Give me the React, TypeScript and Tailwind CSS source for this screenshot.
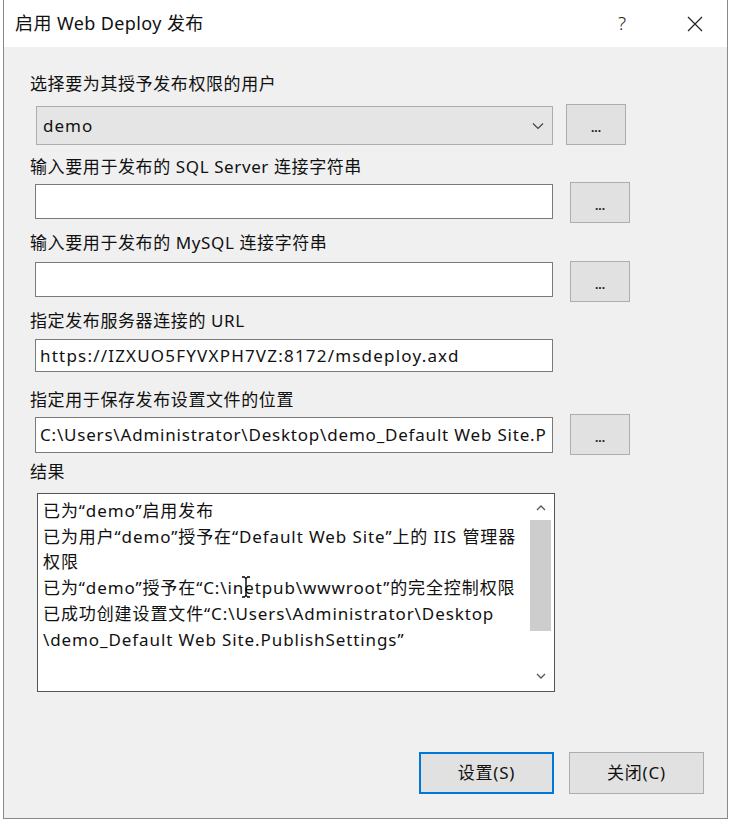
import React from "react";

const font = { fontFamily: '"Noto Sans", "Noto Sans CJK SC", sans-serif' };

function Label({ text, mt }: { text: string; mt: string }) {
  return (
    <div className={`${mt} h-[22px] leading-[22px] pl-[26px] text-[17px] tracking-[0.6px] text-[#111]`}>{text}</div>
  );
}

function DotsButton() {
  return (
    <div className="w-[60px] h-[41px] bg-[#e1e1e1] border border-[#adadad] flex items-end justify-center pb-[10px] text-[12px] leading-none text-[#222] font-bold">
      ...
    </div>
  );
}

function TextBox({ value, h, mt, track = "tracking-[1.2px]" }: { value?: string; h: string; mt: string; track?: string }) {
  return (
    <div className={`w-[518px] ${h} ${mt} bg-white border border-[#7a7a7a] pl-[4px] flex items-center text-[17px] ${track} text-[#111] whitespace-nowrap overflow-hidden`}>
      {value}
    </div>
  );
}

const results = [
  "已为“demo”启用发布",
  "已为用户“demo”授予在“Default Web Site”上的 IIS 管理器",
  "权限",
  "已为“demo”授予在“C:\\inetpub\\wwwroot”的完全控制权限",
  "已成功创建设置文件“C:\\Users\\Administrator\\Desktop",
  "\\demo_Default Web Site.PublishSettings”",
];

export default function App() {
  return (
    <div className="w-[730px] h-[825px] bg-white" style={font}>
      <div className="ml-[3px] w-[725px] h-[819px] border-l border-r border-b border-[#8a8a8a] flex flex-col">
        {/* Title bar */}
        <div className="h-[47px] bg-white flex items-center pl-[11px] pr-[24px]">
          <span className="text-[18px] tracking-[0.4px] text-[#111]">启用 Web Deploy 发布</span>
          <span className="ml-auto text-[19px] font-light text-[#222]">?</span>
          <svg className="ml-[61px]" width="16" height="16" viewBox="0 0 16 16">
            <path d="M1 1 L15 15 M15 1 L1 15" stroke="#222" strokeWidth="1.2" />
          </svg>
        </div>

        {/* Body */}
        <div className="flex-1 bg-[#f0f0f0] flex flex-col">
          <Label text="选择要为其授予发布权限的用户" mt="mt-[26px]" />
          <div className="mt-[9px] flex pl-[32px] gap-[13px]">
            <div className="w-[517px] h-[39px] mt-[2px] bg-[#e5e5e5] border border-[#adadad] flex items-center pl-[6px] pr-[8px] text-[17px] tracking-[1px] text-[#111]">
              demo
              <svg className="ml-auto" width="12" height="8" viewBox="0 0 12 8">
                <path d="M1 1.5 L6 6.5 L11 1.5" stroke="#444" strokeWidth="1.2" fill="none" />
              </svg>
            </div>
            <DotsButton />
          </div>

          <Label text="输入要用于发布的 SQL Server 连接字符串" mt="mt-[11px]" />
          <div className="mt-[4px] flex items-start pl-[31px] gap-[17px]">
            <TextBox h="h-[35px]" mt="mt-[2px]" />
            <DotsButton />
          </div>

          <Label text="输入要用于发布的 MySQL 连接字符串" mt="mt-[9px]" />
          <div className="mt-[7px] flex items-start pl-[31px] gap-[17px]">
            <TextBox h="h-[35px]" mt="mt-[1px]" />
            <DotsButton />
          </div>

          <Label text="指定发布服务器连接的 URL" mt="mt-[8px]" />
          <div className="mt-[7px] flex pl-[31px]">
            <TextBox h="h-[33px]" mt="mt-0" value="https://IZXUO5FYVXPH7VZ:8172/msdeploy.axd" />
          </div>

          <Label text="指定用于保存发布设置文件的位置" mt="mt-[17px]" />
          <div className="mt-[3px] flex items-start pl-[31px] gap-[17px]">
            <TextBox
              h="h-[36px]"
              mt="mt-[3px]"
              track="tracking-[0.8px]"
              value="C:\Users\Administrator\Desktop\demo_Default Web Site.P"
            />
            <DotsButton />
          </div>

          <Label text="结果" mt="mt-[6px]" />
          <div className="mt-[10px] ml-[33px] w-[518px] h-[199px] bg-white border border-[#555] flex relative">
            <div className="flex-1 pl-[5px] pt-[4px] text-[17px] tracking-[0.9px] text-[#111] leading-[25.7px]">
              {results.map((line, i) => (
                <div key={i} className="whitespace-nowrap">{line}</div>
              ))}
            </div>
            <div className="w-[21px] mr-[3px] flex flex-col items-center">
              <svg className="mt-[11px]" width="10" height="6" viewBox="0 0 10 6">
                <path d="M1 5 L5 1 L9 5" stroke="#555" strokeWidth="1.3" fill="none" />
              </svg>
              <div className="mt-[9px] w-[21px] h-[111px] bg-[#cdcdcd]" />
              <svg className="mt-auto mb-[12px]" width="10" height="6" viewBox="0 0 10 6">
                <path d="M1 1 L5 5 L9 1" stroke="#555" strokeWidth="1.3" fill="none" />
              </svg>
            </div>
            {/* I-beam mouse cursor */}
            <svg className="absolute left-[203px] top-[82px]" width="10" height="22" viewBox="0 0 10 22">
              <path d="M1 1 H4 M6 1 H9 M5 2 V20 M1 21 H4 M6 21 H9 M4 1.5 L5 2.5 L6 1.5 M4 20.5 L5 19.5 L6 20.5" stroke="#000" strokeWidth="1.4" fill="none" />
            </svg>
          </div>

          <div className="mt-[60px] flex justify-end pr-[23px] gap-[15px]">
            <div className="w-[135px] h-[42px] bg-[#e1e1e1] border-2 border-[#0078d7] flex items-center justify-center text-[17px] tracking-[0.8px] text-[#111]">
              设置(S)
            </div>
            <div className="w-[135px] h-[42px] bg-[#e1e1e1] border border-[#adadad] flex items-center justify-center text-[17px] tracking-[0.8px] text-[#111]">
              关闭(C)
            </div>
          </div>
        </div>
      </div>
    </div>
  );
}
